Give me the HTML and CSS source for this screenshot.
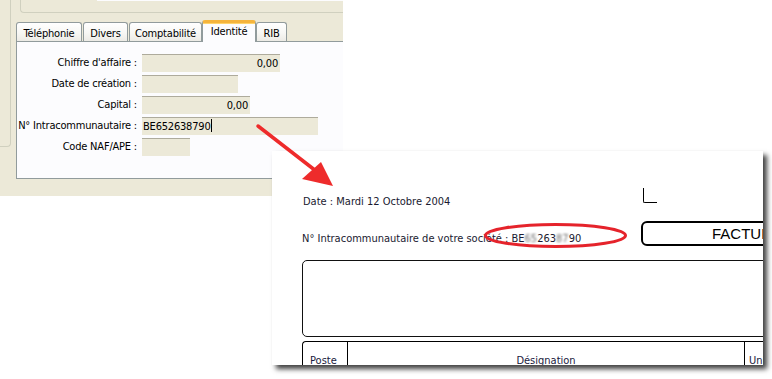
FILE: index.html
```html
<!DOCTYPE html>
<html lang="fr">
<head>
<meta charset="utf-8">
<title>Identité - N° Intracommunautaire</title>
<link rel="stylesheet" href="styles.css">
</head>
<body>
<div class="stage">
  <div class="xp">
    <div class="side-frame"></div>
    <div class="xp-main">
      <div class="top-frame"><div class="top-strip"></div></div>
      <div class="tabs">
        <div class="tab t-tel">Téléphonie</div>
        <div class="tab t-div">Divers</div>
        <div class="tab t-compta">Comptabilité</div>
        <div class="tab t-ident active">Identité</div>
        <div class="tab t-rib">RIB</div>
      </div>
      <div class="panel">
        <div class="form">
          <div class="lbl">Chiffre d'affaire :</div>
          <div class="field f-ca num">0,00</div>
          <div class="lbl">Date de création :</div>
          <div class="field f-date"></div>
          <div class="lbl">Capital :</div>
          <div class="field f-cap num">0,00</div>
          <div class="lbl">N° Intracommunautaire :</div>
          <div class="field f-tva">BE652638790<span class="caret"></span></div>
          <div class="lbl">Code NAF/APE :</div>
          <div class="field f-naf"></div>
        </div>
      </div>
    </div>
  </div>

  <div class="paper">
    <div class="row1">
      <div class="date">Date : Mardi 12 Octobre 2004</div>
      <div class="corner"></div>
    </div>
    <div class="row2">
      <div class="tva">N° Intracommunautaire de votre société : BE<span class="smudge">65</span>263<span class="smudge">87</span>90</div>
      <div class="facture">FACTURE</div>
    </div>
    <div class="bigbox"></div>
    <div class="table">
      <div class="cell c-poste">Poste</div>
      <div class="cell c-desig">Désignation</div>
      <div class="cell c-un">Unité</div>
    </div>
  </div>

  <svg class="overlay" width="772" height="379" viewBox="0 0 772 379">
    <ellipse cx="555.5" cy="235.5" rx="70" ry="11" fill="none" stroke="#e5232b" stroke-width="3"/>
    <line x1="258" y1="126" x2="316" y2="171" stroke="#ee2b2b" stroke-width="3.5" stroke-linecap="round"/>
    <polygon points="333,186 302,179 321,162" fill="#ee2b2b"/>
  </svg>
</div>
</body>
</html>
```

FILE: styles.css
```css
html, body {
  margin: 0;
  padding: 0;
  background: #ffffff;
}

.stage {
  position: relative;
  width: 772px;
  height: 379px;
  overflow: hidden;
  background: #ffffff;
  font-family: "DejaVu Sans Condensed", "DejaVu Sans", sans-serif;
  font-size: 11px;
  color: #000;
}

/* ---------- XP dialog ---------- */
.xp {
  display: flex;
  width: 343px;
  height: 196px;
  background: #ece9d8;
  letter-spacing: -0.2px;
}

.side-frame {
  flex: none;
  box-sizing: border-box;
  width: 11px;
  height: 147px;
  border-right: 1px solid #d0d0bf;
  border-bottom: 1px solid #d0d0bf;
  border-bottom-right-radius: 4px;
}

.xp-main {
  flex: 1;
  margin-left: 5px;
  display: flex;
  flex-direction: column;
}

.top-frame {
  box-sizing: border-box;
  margin-left: 4px;
  height: 13px;
  border-left: 1px solid #d0d0bf;
  border-bottom: 1px solid #d0d0bf;
  border-bottom-left-radius: 4px;
}

.top-strip {
  margin-left: 76px;
  height: 1px;
  background: #fcfcfe;
}

.tabs {
  margin-top: 7px;
  height: 21px;
  display: flex;
  align-items: flex-end;
}

.tab {
  box-sizing: border-box;
  height: 19px;
  line-height: 19px;
  padding-top: 1px;
  margin-right: 1px;
  text-align: center;
  border: 1px solid #919b9c;
  border-bottom: none;
  border-radius: 3px 3px 0 0;
  background: linear-gradient(#ffffff, #f7f7f4 55%, #ecebe5);
  white-space: nowrap;
}

.t-tel { width: 66px; }
.t-div { width: 45px; }
.t-compta { width: 73px; }
.t-ident { width: 54px; }
.t-rib { width: 31px; }

.tab.active {
  position: relative;
  z-index: 1;
  height: 22px;
  line-height: 18px;
  padding-top: 0;
  margin: 0 0 -1px -1px;
  border-top: 3px solid #f5b43c;
  background: #fcfcfe;
  box-shadow: inset 0 1px 0 #ffd36b;
}

.panel {
  box-sizing: border-box;
  height: 138px;
  border: 1px solid #919b9c;
  border-right: none;
  background: #fcfcfe;
  padding-top: 12px;
}

.form {
  display: grid;
  grid-template-columns: 120px auto;
  grid-auto-rows: 18px;
  column-gap: 5px;
  row-gap: 3px;
  justify-items: start;
}

.lbl {
  justify-self: end;
  line-height: 18px;
  white-space: nowrap;
}

.field {
  box-sizing: border-box;
  height: 18px;
  line-height: 17px;
  padding: 0 1px;
  border-top: 1px solid #aeab9c;
  background: #ece9d8;
  white-space: nowrap;
}

.field.num {
  text-align: right;
  padding-right: 2px;
}

.f-ca { width: 138px; }
.f-date { width: 96px; }
.f-cap { width: 108px; }
.f-tva { width: 176px; }
.f-naf { width: 48px; }

.caret {
  display: inline-block;
  width: 1px;
  height: 13px;
  background: #000;
  vertical-align: -2px;
}

/* ---------- Invoice paper ---------- */
.paper {
  position: absolute;
  left: 272px;
  top: 151px;
  width: 491px;
  height: 214px;
  background: #ffffff;
  box-shadow: 4px 4px 5px rgba(0, 0, 0, 0.75);
  overflow: hidden;
  box-sizing: border-box;
  padding: 37px 0 0 30px;
  color: #1a1a30;
}

.row1 {
  display: grid;
  grid-template-columns: 341px 14px;
  height: 15px;
}

.date {
  margin: 7px 0 0 1px;
  line-height: 14px;
  white-space: nowrap;
}

.corner {
  box-sizing: border-box;
  width: 14px;
  height: 15px;
  border-left: 1px solid #000;
  border-bottom: 1px solid #000;
  border-bottom-left-radius: 2px;
}

.row2 {
  margin-top: 18px;
  display: grid;
  grid-template-columns: 339px 212px;
  height: 25px;
}

.tva {
  margin-top: 11px;
  line-height: 14px;
  white-space: nowrap;
}

.smudge {
  filter: blur(1px);
  color: #707070;
}

.facture {
  box-sizing: border-box;
  height: 25px;
  border: 2px solid #000;
  border-radius: 6px;
  text-align: center;
  line-height: 21px;
  font-family: "Liberation Sans", Arial, sans-serif;
  font-size: 15px;
  color: #000;
}

.bigbox {
  margin-top: 14px;
  box-sizing: border-box;
  width: 600px;
  height: 77px;
  border: 1px solid #111;
  border-radius: 5px;
}

.table {
  margin-top: 4px;
  box-sizing: border-box;
  width: 600px;
  height: 40px;
  display: grid;
  grid-template-columns: 45px 397px 1fr;
  border-top: 1px solid #000;
  border-left: 1px solid #000;
  border-top-left-radius: 4px;
}

.cell {
  box-sizing: border-box;
  padding-top: 12px;
  line-height: 14px;
  color: #1a1a40;
  white-space: nowrap;
}

.c-poste {
  padding-left: 7px;
  border-right: 1px solid #000;
}

.c-desig {
  text-align: center;
  border-right: 1px solid #000;
}

.c-un {
  padding-left: 4px;
}

.overlay {
  position: absolute;
  left: 0;
  top: 0;
  pointer-events: none;
}
```
